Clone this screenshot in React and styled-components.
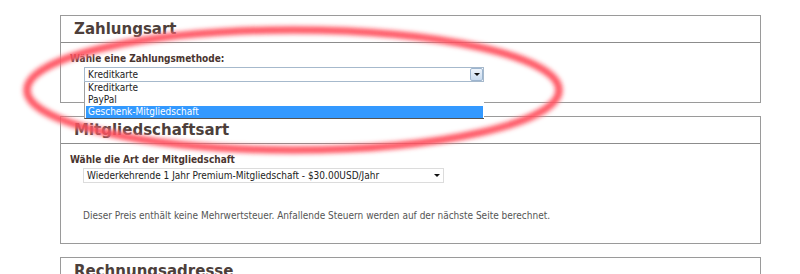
import React from 'react';
import styled, { createGlobalStyle } from 'styled-components';

const GlobalStyle = createGlobalStyle`
  html, body {
    margin: 0;
    padding: 0;
    background: #fff;
  }
  body {
    font-family: "DejaVu Sans Condensed", "DejaVu Sans", Verdana, sans-serif;
    color: #4a3d38;
  }
`;

const Page = styled.div`
  position: relative;
  width: 800px;
  height: 274px;
  overflow: hidden;
  padding: 15px 0 0 60px;
  box-sizing: border-box;
`;

const Panel = styled.section`
  position: relative;
  width: 701px;
  box-sizing: border-box;
  border: 1px solid #9a9a9a;
  margin-bottom: 13px;
  height: ${(p) => p.height}px;
`;

const PanelHeader = styled.div`
  height: 26px;
  border-bottom: 1px solid #8c8c8c;
  display: flex;
  align-items: center;
  padding-left: 13px;
`;

const Title = styled.h2`
  margin: 0;
  font-family: "DejaVu Sans", Verdana, sans-serif;
  font-size: 15px;
  font-weight: bold;
  color: #4d3f3b;
`;

const PanelBody = styled.div`
  padding: 10px 9px 0 9px;
`;

const Label = styled.div`
  font-size: 10px;
  font-weight: bold;
  color: #4a3530;
  line-height: 12px;
`;

const SelectBox = styled.div`
  position: relative;
  margin-left: ${(p) => p.indent}px;
  margin-top: 2px;
  width: ${(p) => p.width}px;
  height: 15px;
  box-sizing: border-box;
  border: 1px solid ${(p) => (p.focused ? '#a6b9cc' : '#dcdcdc')};
  display: flex;
  align-items: center;
  justify-content: space-between;
  font-size: 10px;
  color: #222;
  padding-left: 3px;
  background: #fff;
`;

const ArrowButton = styled.div`
  width: 13px;
  height: 13px;
  box-sizing: border-box;
  border: 1px solid #9db5cf;
  border-radius: 2px;
  background: linear-gradient(#eef4fb, #c9dbef);
  display: flex;
  align-items: center;
  justify-content: center;
`;

const PlainArrow = styled.div`
  width: 13px;
  display: flex;
  justify-content: center;
  align-items: center;
`;

const Caret = styled.span`
  width: 0;
  height: 0;
  border-left: 3px solid transparent;
  border-right: 3px solid transparent;
  border-top: 3px solid #111;
`;

const DropList = styled.ul`
  position: absolute;
  left: -1px;
  top: 14px;
  width: 400px;
  margin: 0;
  padding: 0 1px 0 1px;
  box-sizing: border-box;
  list-style: none;
  background: #fff;
  border-left: 1px solid #a0a0a0;
  border-bottom: 1px solid #555;
  z-index: 2;
`;

const Option = styled.li`
  height: 12px;
  line-height: 12px;
  font-size: 10px;
  padding-left: 2px;
  color: ${(p) => (p.selected ? '#fff' : '#222')};
  background: ${(p) => (p.selected ? '#3399ff' : 'transparent')};
`;

const Note = styled.p`
  margin: 27px 0 0 13px;
  font-size: 10px;
  color: #555;
`;

const Highlight = styled.svg`
  position: absolute;
  left: 0;
  top: 0;
  pointer-events: none;
  z-index: 5;
`;

export default function App() {
  return (
    <>
      <GlobalStyle />
      <Page>
        <Panel height={88}>
          <PanelHeader>
            <Title>Zahlungsart</Title>
          </PanelHeader>
          <PanelBody>
            <Label>Wähle eine Zahlungsmethode:</Label>
            <SelectBox indent={14} width={400} focused>
              <span>Kreditkarte</span>
              <ArrowButton>
                <Caret />
              </ArrowButton>
              <DropList>
                <Option>Kreditkarte</Option>
                <Option>PayPal</Option>
                <Option selected>Geschenk-Mitgliedschaft</Option>
              </DropList>
            </SelectBox>
          </PanelBody>
        </Panel>
        <Panel height={128}>
          <PanelHeader>
            <Title>Mitgliedschaftsart</Title>
          </PanelHeader>
          <PanelBody>
            <Label>Wähle die Art der Mitgliedschaft</Label>
            <SelectBox indent={13} width={361}>
              <span>Wiederkehrende 1 Jahr Premium-Mitgliedschaft - $30.00USD/Jahr</span>
              <PlainArrow>
                <Caret />
              </PlainArrow>
            </SelectBox>
            <Note>
              Dieser Preis enthält keine Mehrwertsteuer. Anfallende Steuern werden auf der nächste Seite berechnet.
            </Note>
          </PanelBody>
        </Panel>
        <Panel height={40}>
          <PanelHeader>
            <Title>Rechnungsadresse</Title>
          </PanelHeader>
        </Panel>
        <Highlight width="800" height="274" viewBox="0 0 800 274">
          <defs>
            <filter id="soft" x="-10%" y="-30%" width="120%" height="160%">
              <feGaussianBlur stdDeviation="2" />
            </filter>
          </defs>
          <ellipse cx="293" cy="90" rx="266" ry="60" fill="none" stroke="#ff8088" strokeWidth="9" filter="url(#soft)" opacity="0.7" />
          <ellipse cx="293" cy="90" rx="266" ry="60" fill="none" stroke="#ff3848" strokeWidth="3.5" filter="url(#soft)" />
        </Highlight>
      </Page>
    </>
  );
}
